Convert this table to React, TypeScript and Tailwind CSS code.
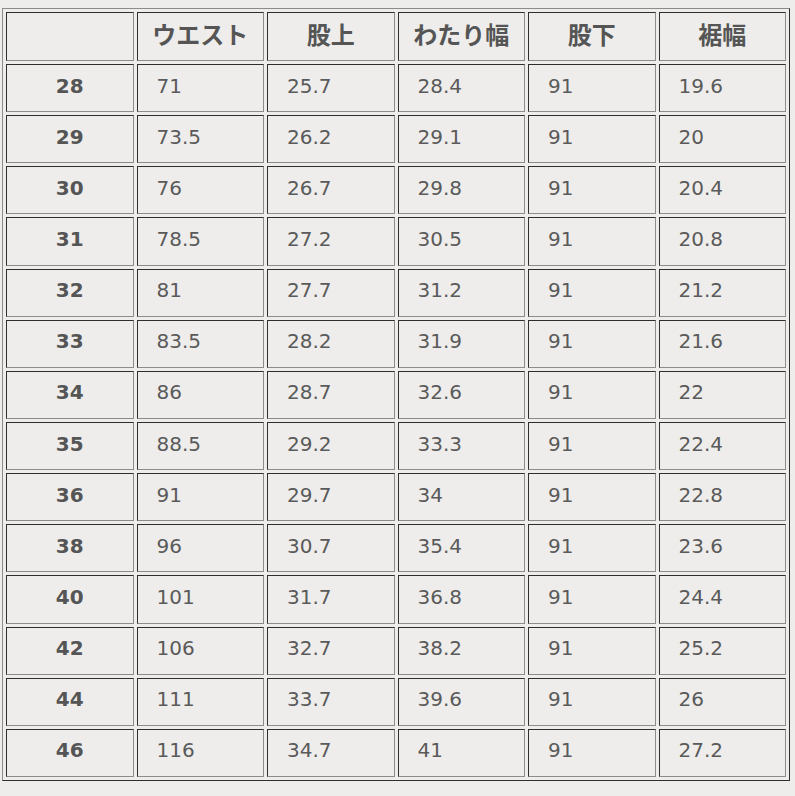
import React from "react";

const headers = ["", "ウエスト", "股上", "わたり幅", "股下", "裾幅"];

const rows: string[][] = [
  ["28", "71", "25.7", "28.4", "91", "19.6"],
  ["29", "73.5", "26.2", "29.1", "91", "20"],
  ["30", "76", "26.7", "29.8", "91", "20.4"],
  ["31", "78.5", "27.2", "30.5", "91", "20.8"],
  ["32", "81", "27.7", "31.2", "91", "21.2"],
  ["33", "83.5", "28.2", "31.9", "91", "21.6"],
  ["34", "86", "28.7", "32.6", "91", "22"],
  ["35", "88.5", "29.2", "33.3", "91", "22.4"],
  ["36", "91", "29.7", "34", "91", "22.8"],
  ["38", "96", "30.7", "35.4", "91", "23.6"],
  ["40", "101", "31.7", "36.8", "91", "24.4"],
  ["42", "106", "32.7", "38.2", "91", "25.2"],
  ["44", "111", "33.7", "39.6", "91", "26"],
  ["46", "116", "34.7", "41", "91", "27.2"],
];

const cell =
  "border border-solid border-t-[#2e2e2e] border-l-[#2e2e2e] border-b-[#8c8c8c] border-r-[#8c8c8c] pt-0 pb-[5px] align-middle";

export default function App() {
  return (
    <div
      className="w-[795px] h-[796px] bg-[#eeedeb] pt-[8px] pl-[2px] overflow-hidden"
      style={{ fontFamily: '"DejaVu Sans", "Noto Sans CJK JP", sans-serif' }}
    >
      <table className="w-[788px] table-fixed border-separate border-spacing-[3px] border border-solid border-t-[#8c8c8c] border-l-[#8c8c8c] border-b-[#2e2e2e] border-r-[#2e2e2e] text-[#555555]">
        <thead>
          <tr className="h-[49px]">
            {headers.map((h, i) => (
              <th
                key={i}
                className={`${cell} px-0 text-center text-[24px] font-bold`}
                style={{ fontFamily: '"Noto Sans CJK JP", sans-serif' }}
              >
                {h}
              </th>
            ))}
          </tr>
        </thead>
        <tbody>
          {rows.map((r, ri) => (
            <tr key={ri} className="h-[48.15px]">
              {r.map((v, ci) =>
                ci === 0 ? (
                  <td key={ci} className={`${cell} px-0 text-center text-[20px] font-bold`}>
                    {v}
                  </td>
                ) : (
                  <td key={ci} className={`${cell} pr-0 text-left pl-[19px] text-[20px] text-[#5a5a5a]`}>
                    {v}
                  </td>
                )
              )}
            </tr>
          ))}
        </tbody>
      </table>
    </div>
  );
}
